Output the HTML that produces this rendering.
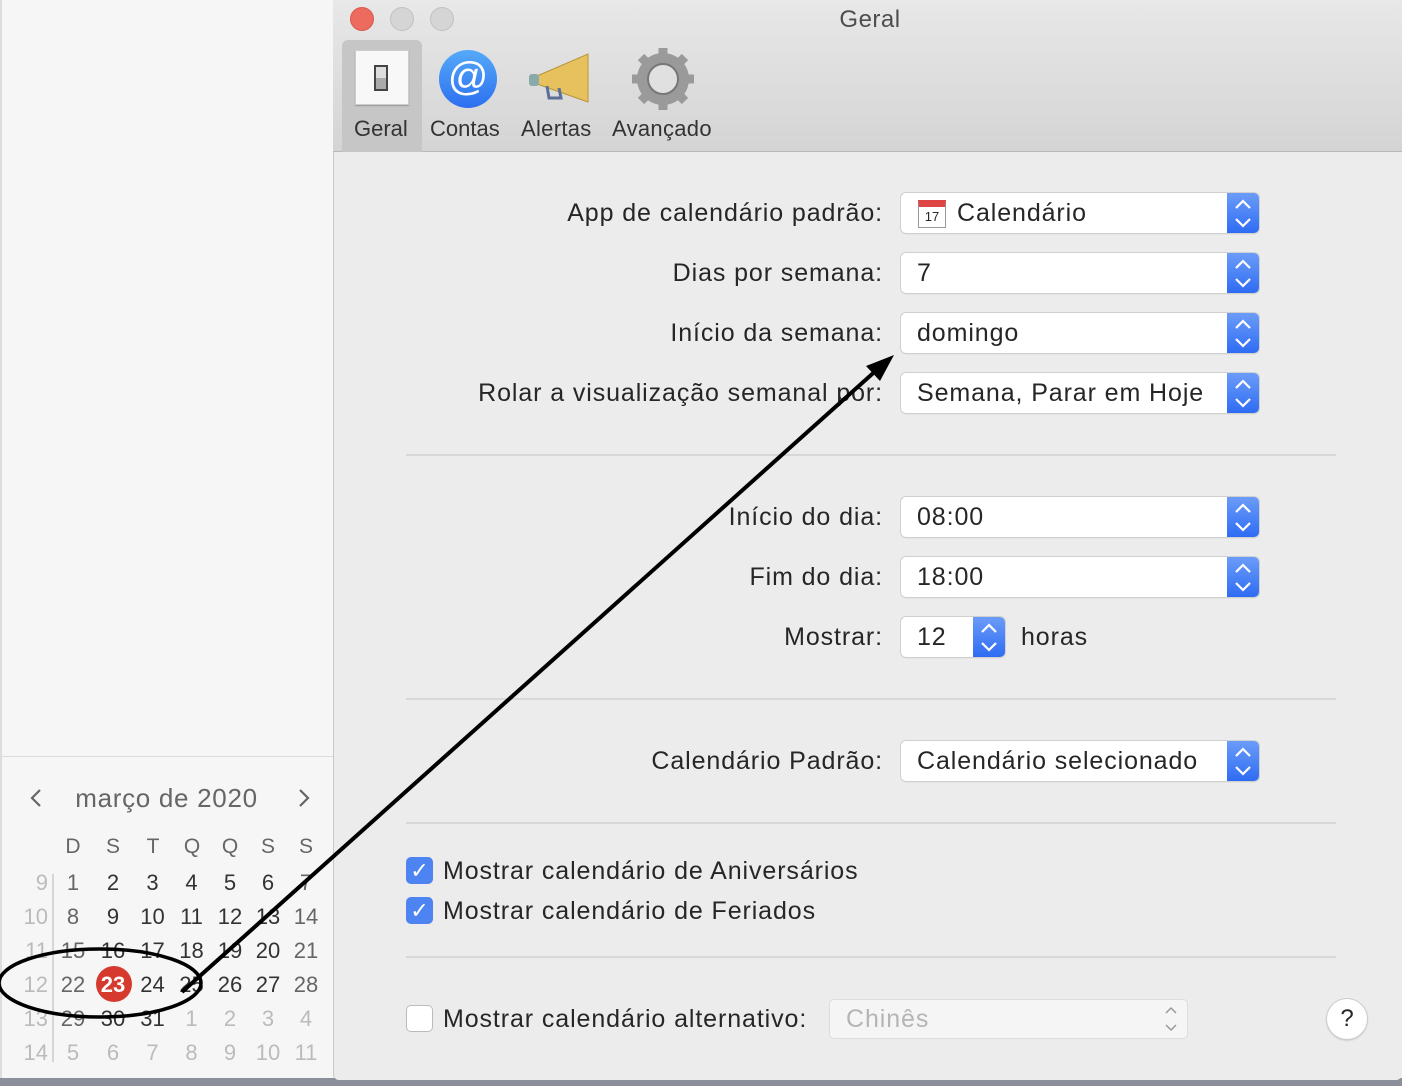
<!DOCTYPE html>
<html><head><meta charset="utf-8"><style>
*{margin:0;padding:0;box-sizing:border-box}
body{width:1402px;height:1086px;overflow:hidden;background:#f5f5f5;font-family:"Liberation Sans",sans-serif;position:relative;color:#262626}
.a{position:absolute}
.win{left:333px;top:0;width:1069px;height:1080px;background:#ececec;border-left:1px solid #c9c9c9;border-radius:0 0 6px 6px}
.tb{left:333px;top:0;width:1069px;height:152px;background:linear-gradient(#e8e8e8,#d4d4d4);border-bottom:1px solid #b9b9b9}
.lbl{font-size:25px;letter-spacing:0.9px;text-align:right;right:519px;line-height:28px;white-space:nowrap}
.pop{left:901px;width:358px;height:40px;background:#fff;border-radius:5px;box-shadow:0 0 0 1px #d0d0d0,0 1px 1px #bbb;font-size:25px;letter-spacing:0.9px;line-height:40px;padding-left:16px}
.blue{position:absolute;right:0;top:0;width:32px;height:40px;background:linear-gradient(#6c9cf8,#2e6cf4);border-radius:0 5px 5px 0}
.sep{left:406px;width:930px;height:2px;background:#d8d8d8}
.cb{width:27px;height:27px;border-radius:5px;background:#4d84f1}
.ct{font-size:25px;letter-spacing:0.9px;line-height:28px;white-space:nowrap}
.cal{font-size:21px;text-align:center;width:30px;line-height:24px}
</style></head><body>
<div class="a" style="left:0;top:0;width:333px;height:1086px;background:#f6f6f6;border-left:2px solid #ddd"></div>
<div class="a" style="left:0;top:756px;width:333px;height:1px;background:#ddd"></div>
<div class="a" style="left:0;top:1078px;width:1402px;height:8px;background:#8a8f99"></div>
<div class="a win"></div>
<div class="a tb"></div>
<div class="a" style="left:350px;top:7px;width:24px;height:24px;border-radius:50%;background:#ec6a5e;border:1px solid #d65a4f"></div>
<div class="a" style="left:390px;top:7px;width:24px;height:24px;border-radius:50%;background:#d5d5d5;border:1px solid #c2c2c2"></div>
<div class="a" style="left:430px;top:7px;width:24px;height:24px;border-radius:50%;background:#d5d5d5;border:1px solid #c2c2c2"></div>
<div class="a" style="left:0;width:1402px;text-align:center;top:6px;font-size:24px;letter-spacing:0.5px;color:#4d4d4d;padding-left:338px">Geral</div>
<div class="a" style="left:342px;top:40px;width:80px;height:112px;background:#c6c6c6;border-radius:6px 6px 0 0"></div>
<div class="a" style="left:355px;top:50px;width:54px;height:55px;background:#f8f8f8;border:1px solid #ccc;box-shadow:0 1px 1px #999"></div>
<div class="a" style="left:374px;top:65px;width:14px;height:26px;border:2px solid #444;background:linear-gradient(#ddd 50%,#aaa 50%)"></div>
<div class="a" style="left:439px;top:50px;width:58px;height:58px;border-radius:50%;background:linear-gradient(#55aaf8,#2c6ff0);color:#fff;font-size:40px;text-align:center;line-height:54px">@</div>
<svg class="a" style="left:525px;top:50px" width="66" height="56"><polygon points="12,26 63,4 63,52 12,34" fill="#e6c15e" stroke="#b89536"/><rect x="4" y="24" width="10" height="12" rx="3" fill="#8aa"/><path d="M22,36 l2,12 h12 l-2,-10" fill="none" stroke="#5b6f98" stroke-width="3"/></svg>
<svg class="a" style="left:630px;top:46px" width="66" height="66" viewBox="0 0 66 66"><g fill="#9a9a9a"><circle cx="33" cy="33" r="26"/><g stroke="#9a9a9a" stroke-width="9"><line x1="33" y1="2" x2="33" y2="64"/><line x1="2" y1="33" x2="64" y2="33"/><line x1="11" y1="11" x2="55" y2="55"/><line x1="55" y1="11" x2="11" y2="55"/></g></g><circle cx="33" cy="33" r="15" fill="#e0e0e0" stroke="#777" stroke-width="2"/></svg>
<div class="a" style="left:354px;top:116px;font-size:22px;color:#333">Geral</div>
<div class="a" style="left:430px;top:116px;font-size:22px;color:#333">Contas</div>
<div class="a" style="left:521px;top:116px;font-size:22px;color:#333;letter-spacing:0.3px">Alertas</div>
<div class="a" style="left:612px;top:116px;font-size:22px;color:#333;letter-spacing:0.3px">Avançado</div>

<div class="a lbl" style="top:199px">App de calendário padrão:</div>
<div class="a pop" style="top:193px;padding-left:56px">Calendário<div class="blue"></div></div>
<div class="a" style="left:918px;top:200px;width:28px;height:28px;background:#fff;border:1px solid #999;border-top:7px solid #d44;font-size:13px;text-align:center;line-height:20px">17</div>
<div class="a lbl" style="top:259px">Dias por semana:</div>
<div class="a pop" style="top:253px">7<div class="blue"></div></div>
<div class="a lbl" style="top:319px">Início da semana:</div>
<div class="a pop" style="top:313px">domingo<div class="blue"></div></div>
<div class="a lbl" style="top:379px">Rolar a visualização semanal por:</div>
<div class="a pop" style="top:373px">Semana, Parar em Hoje<div class="blue"></div></div>
<div class="a sep" style="top:454px"></div>
<div class="a lbl" style="top:503px">Início do dia:</div>
<div class="a pop" style="top:497px">08:00<div class="blue"></div></div>
<div class="a lbl" style="top:563px">Fim do dia:</div>
<div class="a pop" style="top:557px">18:00<div class="blue"></div></div>
<div class="a lbl" style="top:623px">Mostrar:</div>
<div class="a pop" style="top:617px;width:104px">12<div class="blue"></div></div>
<div class="a ct" style="left:1021px;top:623px">horas</div>
<div class="a sep" style="top:698px"></div>
<div class="a lbl" style="top:747px">Calendário Padrão:</div>
<div class="a pop" style="top:741px">Calendário selecionado<div class="blue"></div></div>
<div class="a sep" style="top:822px"></div>
<div class="a cb" style="left:406px;top:857px;color:#fff;font-size:22px;text-align:center;line-height:27px">✓</div>
<div class="a ct" style="left:443px;top:857px">Mostrar calendário de Aniversários</div>
<div class="a cb" style="left:406px;top:897px;color:#fff;font-size:22px;text-align:center;line-height:27px">✓</div>
<div class="a ct" style="left:443px;top:897px">Mostrar calendário de Feriados</div>
<div class="a sep" style="top:956px"></div>
<div class="a" style="left:406px;top:1005px;width:27px;height:27px;border-radius:5px;background:#fff;border:1px solid #bbb"></div>
<div class="a ct" style="left:443px;top:1005px">Mostrar calendário alternativo:</div>
<div class="a" style="left:829px;top:999px;width:359px;height:40px;background:#f5f5f5;border:1px solid #ddd;border-radius:5px;font-size:25px;letter-spacing:0.9px;line-height:38px;padding-left:16px;color:#b5b5b5">Chinês</div>
<div class="a" style="left:1327px;top:999px;width:40px;height:40px;border-radius:50%;background:#fff;box-shadow:0 0 0 1px #ccc,0 1px 2px #aaa;text-align:center;font-size:24px;line-height:40px">?</div>

<svg class="a" style="left:0;top:0" width="1402" height="1086">
<g fill="none" stroke="#fff" stroke-width="2.2">
<path d="M1236,208 l7,-7 l7,7 M1236,219 l7,7 l7,-7"/><path d="M1236,268 l7,-7 l7,7 M1236,279 l7,7 l7,-7"/><path d="M1236,328 l7,-7 l7,7 M1236,339 l7,7 l7,-7"/><path d="M1236,388 l7,-7 l7,7 M1236,399 l7,7 l7,-7"/><path d="M1236,512 l7,-7 l7,7 M1236,523 l7,7 l7,-7"/><path d="M1236,572 l7,-7 l7,7 M1236,583 l7,7 l7,-7"/><path d="M982,632 l7,-7 l7,7 M982,643 l7,7 l7,-7"/><path d="M1236,756 l7,-7 l7,7 M1236,767 l7,7 l7,-7"/>
</g>
<path d="M1166,1013 l5,-5 l5,5 M1166,1025 l5,5 l5,-5" fill="none" stroke="#999" stroke-width="1.5"/>
<path d="M40,790 l-8,8 l8,8 M300,790 l8,8 l-8,8" fill="none" stroke="#666" stroke-width="2.2"/>
<line x1="53" y1="874" x2="53" y2="1062" stroke="#ccc" stroke-width="1.5"/>
<circle cx="114" cy="984" r="18" fill="#d63a2f"/>
</svg>
<div class="a" style="left:0;width:333px;top:783px;text-align:center;font-size:26px;letter-spacing:0.7px;color:#666">março de 2020</div>
<div class="a cal" style="left:58px;top:835px;color:#666">D</div><div class="a cal" style="left:98px;top:835px;color:#666">S</div><div class="a cal" style="left:138px;top:835px;color:#666">T</div><div class="a cal" style="left:177px;top:835px;color:#666">Q</div><div class="a cal" style="left:215px;top:835px;color:#666">Q</div><div class="a cal" style="left:253px;top:835px;color:#666">S</div><div class="a cal" style="left:291px;top:835px;color:#666">S</div>
<div class="a" style="left:0;top:866px;font-size:22px;line-height:34px">
<div style="position:absolute;left:12px;width:36px;text-align:right;color:#bbb">9<br>10<br>11<br>12<br>13<br>14</div>
</div>
<div class="a" style="left:53px;top:866px;font-size:22px;line-height:34px;color:#333">
<div style="display:grid;grid-template-columns:40px 40px 39px 39px 38px 38px 38px;text-align:center;width:272px">
<span style="color:#666">1</span><span>2</span><span>3</span><span>4</span><span>5</span><span>6</span><span style="color:#666">7</span>
<span style="color:#666">8</span><span>9</span><span>10</span><span>11</span><span>12</span><span>13</span><span style="color:#666">14</span>
<span style="color:#666">15</span><span>16</span><span>17</span><span>18</span><span>19</span><span>20</span><span style="color:#666">21</span>
<span style="color:#666">22</span><span style="color:#fff;font-weight:bold">23</span><span>24</span><span>25</span><span>26</span><span>27</span><span style="color:#666">28</span>
<span style="color:#666">29</span><span>30</span><span>31</span><span style="color:#bbb">1</span><span style="color:#bbb">2</span><span style="color:#bbb">3</span><span style="color:#bbb">4</span>
<span style="color:#bbb">5</span><span style="color:#bbb">6</span><span style="color:#bbb">7</span><span style="color:#bbb">8</span><span style="color:#bbb">9</span><span style="color:#bbb">10</span><span style="color:#bbb">11</span>
</div></div>
<svg class="a" style="left:0;top:0" width="1402" height="1086">
<ellipse cx="100" cy="983" rx="101" ry="34" fill="none" stroke="#000" stroke-width="3.5"/>
<line x1="182" y1="992" x2="880" y2="367" stroke="#000" stroke-width="4"/>
<polygon points="894,355 866,366 880,381" fill="#000"/>
</svg>
</body></html>
